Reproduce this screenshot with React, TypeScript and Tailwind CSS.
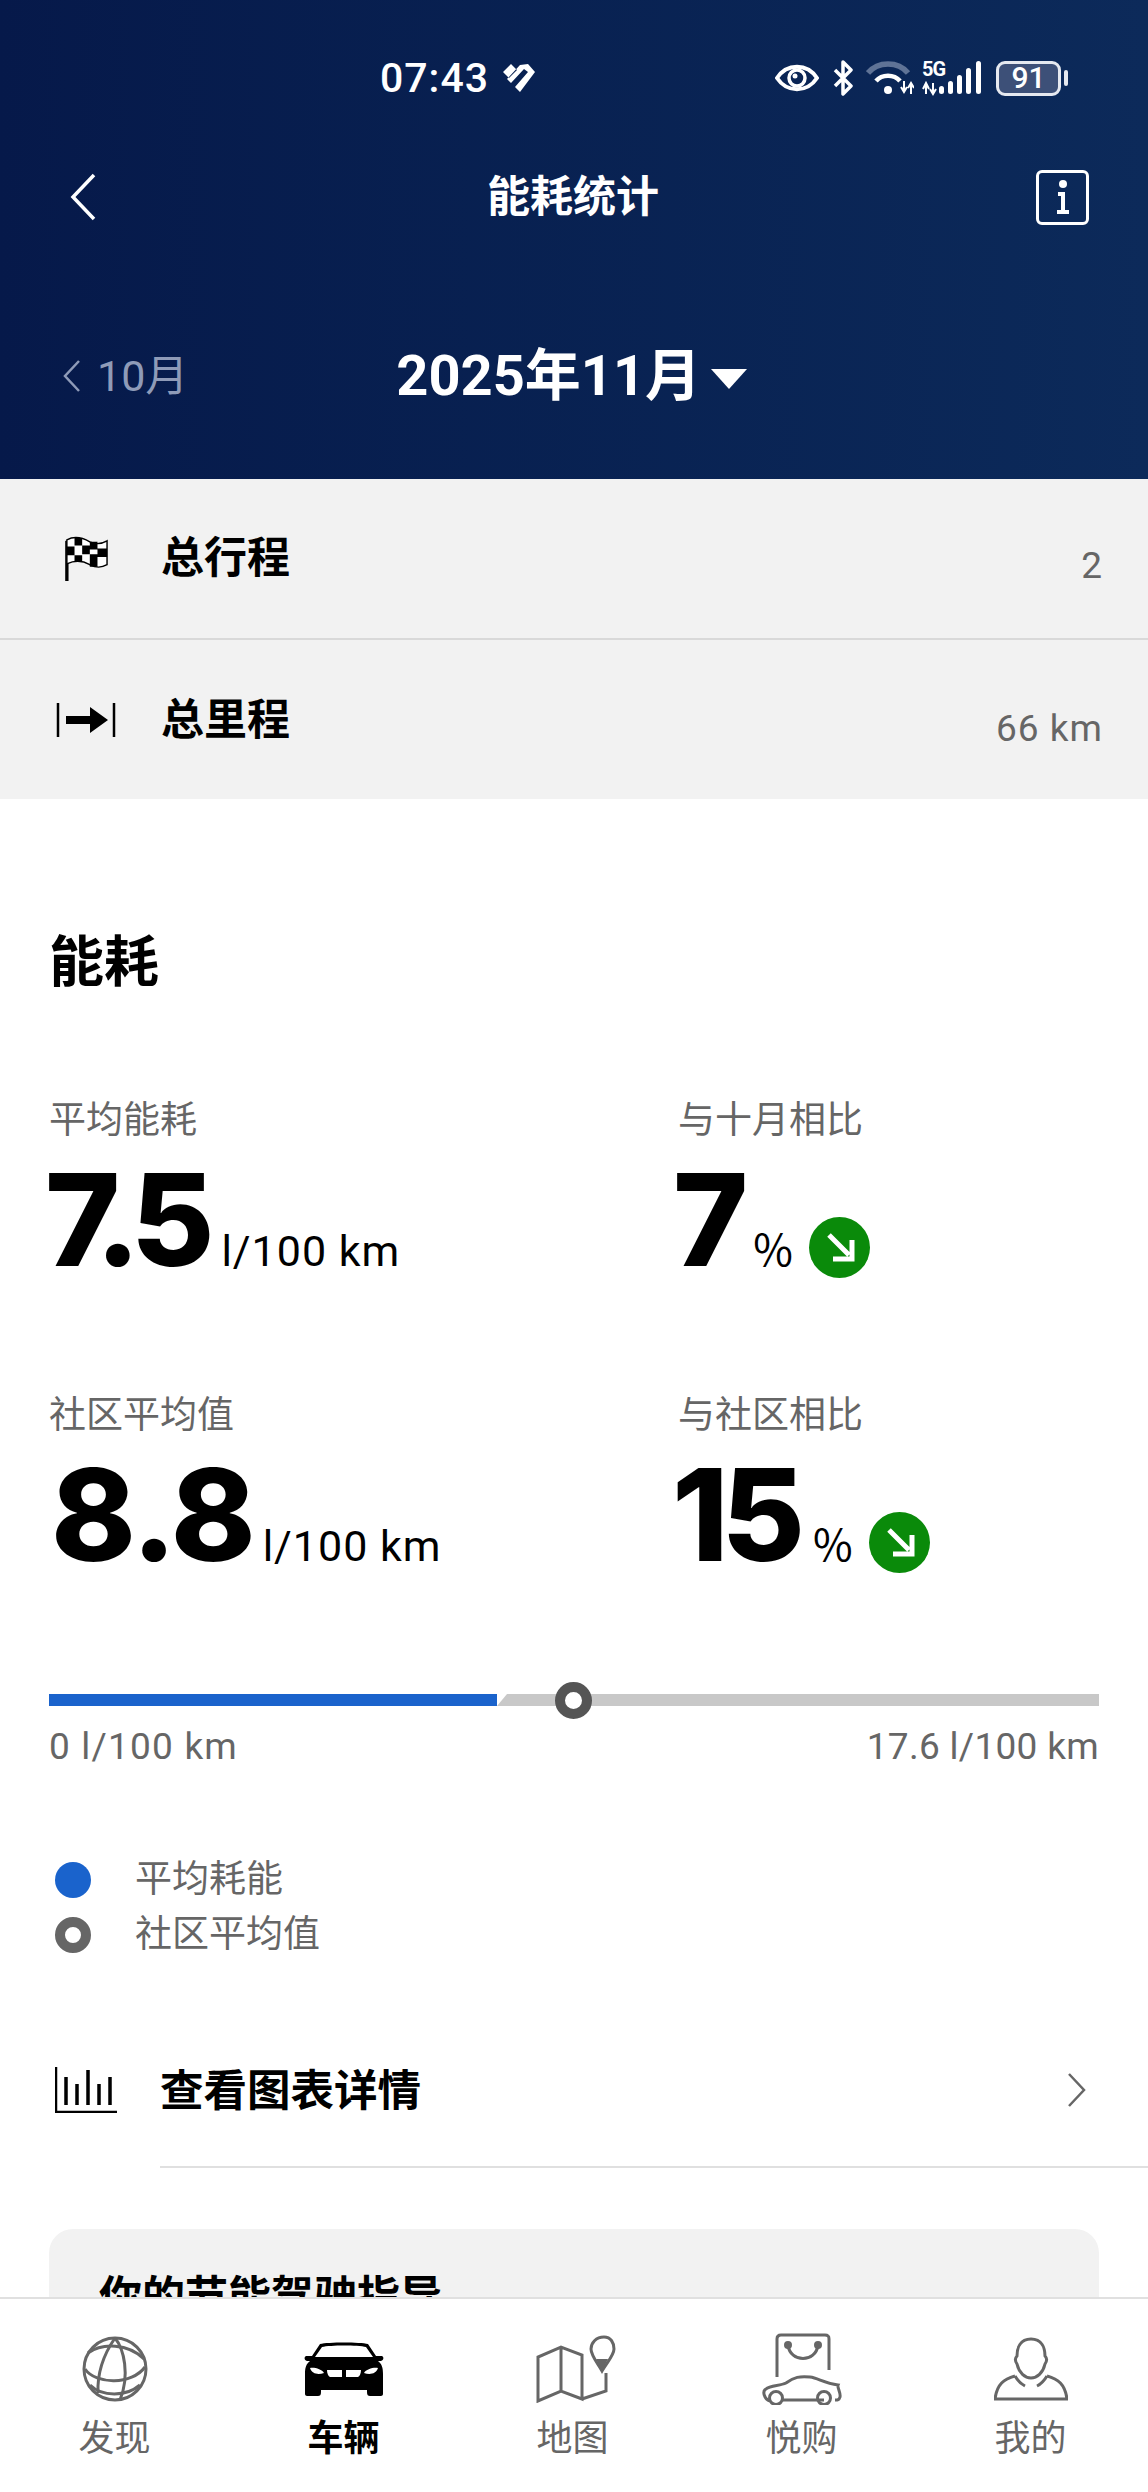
import React, { ReactNode } from "react";

const TabItem = ({ label, active, children }: { label: string; active?: boolean; children: ReactNode }) => {
  return (
    <div className="flex w-[229px] flex-col items-center">
      <div className="flex h-[72px] items-center justify-center">{children}</div>
      <div className={active ? "mt-[12px] text-[36px] leading-[44px] font-bold text-black" : "mt-[12px] text-[36px] leading-[44px] text-[#666]"}>
        {label}
      </div>
    </div>
  );
};

const DownBadge = () => {
  return (
    <svg width="61" height="61" viewBox="0 0 61 61" className="ml-[16px] translate-y-3">
      <circle cx="30.5" cy="30.5" r="30.5" fill="#0a8a0a" />
      <path d="M20 18 L40 38 M43 23 V42 H24" fill="none" stroke="#fff" strokeWidth="5" />
    </svg>
  );
};

const Stat = ({ label, value, valueClass, unit, unitClass, badge }: { label: string; value: string; valueClass: string; unit: string; unitClass: string; badge?: boolean }) => {
  return (
    <div className="flex flex-col">
      <div className="text-[37px] leading-[44px] text-[#666]">{label}</div>
      <div className="mt-[12px] flex h-[130px] items-baseline">
        <span className={valueClass}>{value}</span>
        <span className={unitClass}>{unit}</span>
        {badge && <DownBadge />}
      </div>
    </div>
  );
};

const SummaryRow = ({ icon, label, value, labelClass, valueClass, border }: { icon: ReactNode; label: string; value: string; labelClass: string; valueClass: string; border?: boolean }) => {
  return (
    <div className={border ? "flex h-[161px] items-center border-b-2 border-[#d9d9d9] bg-[#f2f2f2] pr-[45px]" : "flex h-[159px] items-center bg-[#f2f2f2] pr-[45px]"}>
      <div className="flex w-[161px] justify-start pl-[55px]">{icon}</div>
      <div className={labelClass}>{label}</div>
      <div className={valueClass}>{value}</div>
    </div>
  );
};

export default function App() {
  return (
    <div className="flex h-[2492px] w-[1148px] flex-col overflow-hidden bg-white font-[Roboto,'Noto_Sans_CJK_SC',sans-serif]">
      <div className="flex-1 overflow-hidden">
        <div className="h-[479px] overflow-hidden bg-gradient-to-r from-[#06194a] to-[#0c2a5a] text-white">
          {/* status bar */}
          <div className="flex h-[108px] items-center pt-[48px] pl-[380px]">
            <div className="text-[41px] leading-[44px] font-medium tracking-[1px]">07:43</div>
            <svg width="34" height="30" viewBox="0 0 34 30" className="ml-[13px]">
              <path d="M9 1 L1 9 L7 15 L15 7 Z M18 2 L26 1 L33 9 L18 29 L13 24 L26 9 L22 6 L9 20 L5 16 Z" fill="#fff" />
            </svg>
            <svg width="44" height="28" viewBox="0 0 44 28" className="ml-[239px]">
              <path d="M2 14 C12 -1 32 -1 42 14 C32 29 12 29 2 14 Z" fill="none" stroke="#fff" strokeWidth="4" />
              <circle cx="22" cy="14" r="8" fill="none" stroke="#fff" strokeWidth="3.5" />
              <circle cx="20" cy="12" r="2.5" fill="#fff" />
            </svg>
            <svg width="24" height="36" viewBox="0 0 24 36" className="ml-[12px]">
              <path d="M4 10 L20 26 L12 34 V2 L20 10 L4 26" fill="none" stroke="#fff" strokeWidth="3.5" strokeLinejoin="round" />
            </svg>
            <svg width="48" height="36" viewBox="0 0 48 36" className="ml-[11px]">
              <path d="M2 13 C12 1 32 1 42 13" fill="none" stroke="#5f7396" strokeWidth="5.5" />
              <path d="M10 21 C16 14 28 14 34 21" fill="none" stroke="#fff" strokeWidth="4.5" />
              <circle cx="22" cy="30" r="4" fill="#fff" />
              <path d="M38 21 V32 M45 23 V34 M35 27 L38 32 L41 27 M42 28 L45 23 L48 28" fill="none" stroke="#fff" strokeWidth="2" />
            </svg>
            <div className="ml-[8px] flex h-[36px] w-[60px] flex-col">
              <div className="text-[20px] leading-[18px] font-bold tracking-[-1px]">5G</div>
              <svg width="60" height="36" viewBox="0 0 60 36" className="-mt-[18px]">
                <path d="M4 23 V34 M11 23 V34 M1 29 L4 23 L7 29 M8 29 L11 34 L14 29" fill="none" stroke="#fff" strokeWidth="2" />
                <rect x="17" y="26" width="5" height="8" rx="2.5" fill="#fff" />
                <rect x="26" y="21" width="5" height="13" rx="2.5" fill="#fff" />
                <rect x="35" y="15" width="5" height="19" rx="2.5" fill="#fff" />
                <rect x="44" y="8" width="5" height="26" rx="2.5" fill="#fff" />
                <rect x="54" y="1" width="5" height="33" rx="2.5" fill="#fff" />
              </svg>
            </div>
            <div className="ml-[14px] flex h-[35px] w-[65px] items-center justify-center rounded-[9px] border-[3px] border-[#e6e9f0] bg-[#3d5078] text-[30px] leading-[30px] font-medium">
              91
            </div>
            <div className="ml-[3px] h-[16px] w-[4px] rounded-full bg-[#e6e9f0]" />
          </div>

          {/* title */}
          <div className="mt-[57px] flex h-[64px] items-center pr-[59px] pl-[70px]">
            <svg width="26" height="48" viewBox="0 0 26 48">
              <path d="M24 2 L3 24 L24 46" fill="none" stroke="#fff" strokeWidth="3.5" />
            </svg>
            <div className="ml-[391px] text-[43px] leading-[56px] font-bold">能耗统计</div>
            <div className="ml-auto flex h-[55px] w-[53px] items-center justify-center rounded-[6px] border-[3px] border-white">
              <svg width="16" height="36" viewBox="0 0 16 36">
                <circle cx="8" cy="5" r="4" fill="#fff" />
                <path d="M3 13 H10 V31 H14 V35 H2 V31 H6 V17 H3 Z" fill="#fff" />
              </svg>
            </div>
          </div>

          {/* month */}
          <div className="mt-[112px] flex h-[70px] items-center pl-[62px]">
            <svg width="18" height="32" viewBox="0 0 18 32">
              <path d="M17 1 L3 16 L17 31" fill="none" stroke="#8f9bb8" strokeWidth="2.5" />
            </svg>
            <div className="ml-[17px] text-[43px] leading-[50px] text-[#8f9bb8]">10月</div>
            <div className="ml-[208px] text-[56px] leading-[70px] font-bold">2025年11月</div>
            <svg width="36" height="20" viewBox="0 0 36 20" className="mt-[6px] ml-[10px]">
              <path d="M0 0 H36 L18 20 Z" fill="#fff" />
            </svg>
          </div>
        </div>

        <SummaryRow
          border
          label="总行程"
          value="2"
          labelClass="-mt-[2px] text-[43px] leading-[56px] font-bold text-black"
          valueClass="mt-[15px] ml-auto text-[37px] leading-[46px] tracking-[1px] text-[#666]"
          icon={
            <svg width="44" height="48" viewBox="0 0 46 48" className="ml-[9px]">
              <path d="M3 5 V47" stroke="#000" strokeWidth="3.5" />
              <path d="M3 4 C12 -1 20 2 27 6 C33 9 38 9 45 5 V30 C38 34 33 33 27 30 C20 26 12 25 3 29 Z" fill="#fff" stroke="#000" strokeWidth="1.5" />
              <path d="M11 2 H19 V10 H11 Z M27 6 H35 V14 H27 Z M3 11 H11 V20 H3 Z M19 10 H27 V19 H19 Z M35 13 H45 V22 H35 Z M11 20 H19 V27 H11 Z M27 19 H35 V32 H27 Z" fill="#000" />
            </svg>
          }
        />
        <SummaryRow
          label="总里程"
          value="66 km"
          labelClass="text-[43px] leading-[56px] font-bold text-black"
          valueClass="mt-[18px] ml-auto text-[37px] leading-[46px] tracking-[1px] text-[#666]"
          icon={
            <svg width="60" height="36" viewBox="0 0 60 36" className="ml-[1px]">
              <path d="M2 1 V35 M58 1 V35" stroke="#000" strokeWidth="2.5" />
              <path d="M10 14 H34 V5 L52 18 L34 31 V22 H10 Z" fill="#000" />
            </svg>
          }
        />

        <div className="pt-[136px] pl-[49px] text-black">
          <div className="h-[54px] text-[55px] leading-[54px] font-bold">能耗</div>

          <div className="mt-[110px] grid grid-cols-[629px_1fr] gap-y-[109px]">
            <Stat
              label="平均能耗"
              value="7.5"
              valueClass="-ml-[4px] font-[Inter] text-[128px] leading-[130px] font-extrabold tracking-[-9px]"
              unit="l/100 km"
              unitClass="ml-[16px] text-[43px] leading-[50px] tracking-[1px]"
            />
            <Stat
              label="与十月相比"
              value="7"
              valueClass="-ml-[5px] font-[Inter] text-[128px] leading-[130px] font-extrabold"
              unit="%"
              unitClass="ml-[5px] font-['Noto_Sans_CJK_SC'] text-[43px] leading-[50px]"
              badge
            />
            <Stat
              label="社区平均值"
              value="8.8"
              valueClass="ml-[2px] font-[Inter] text-[128px] leading-[130px] font-extrabold tracking-[-2px]"
              unit="l/100 km"
              unitClass="ml-[9px] text-[43px] leading-[50px] tracking-[1px]"
            />
            <Stat
              label="与社区相比"
              value="15"
              valueClass="-ml-[6px] font-[Inter] text-[128px] leading-[130px] font-extrabold tracking-[-7px]"
              unit="%"
              unitClass="ml-[15px] font-['Noto_Sans_CJK_SC'] text-[43px] leading-[50px]"
              badge
            />
          </div>

          {/* range bar */}
          <div className="relative mt-[114px] flex h-[12px] w-[1050px]">
            <div className="w-[448px] bg-[#1a63cc]" />
            <div className="flex-1 bg-[#c8c8c8] [clip-path:polygon(10px_0,100%_0,100%_100%,0_100%)]" />
            <div className="absolute top-[-12px] left-[506px] h-[37px] w-[37px] rounded-full border-[10px] border-[#555] bg-white" />
          </div>
          <div className="mt-[18px] flex w-[1050px] justify-between text-[37px] leading-[46px] text-[#666]">
            <span className="tracking-[1.2px]">0 l/100 km</span>
            <span className="tracking-[0.3px]">17.6 l/100 km</span>
          </div>

          {/* legend */}
          <div className="mt-[88px] flex flex-col gap-[11px]">
            <div className="flex h-[44px] items-center text-[37px] leading-[44px] text-[#666]">
              <div className="ml-[6px] h-[36px] w-[36px] rounded-full bg-[#1a63cc]" />
              <div className="ml-[44px]">平均耗能</div>
            </div>
            <div className="flex h-[44px] items-center text-[37px] leading-[44px] text-[#666]">
              <div className="ml-[6px] h-[36px] w-[36px] rounded-full border-[10px] border-[#666] bg-white" />
              <div className="ml-[44px]">社区平均值</div>
            </div>
          </div>
        </div>

        {/* chart link */}
        <div className="mt-[103px] flex h-[60px] items-center pr-[62px] pl-[55px]">
          <svg width="62" height="46" viewBox="0 0 62 46">
            <path d="M1 0 V45 H62" fill="none" stroke="#000" strokeWidth="2.5" />
            <path d="M11 10 V38 M22 17 V38 M33 3 V38 M44 17 V38 M55 10 V38" stroke="#000" strokeWidth="3.5" />
          </svg>
          <div className="mt-[4px] ml-[43px] text-[43.5px] leading-[56px] font-bold text-black">查看图表详情</div>
          <svg width="18" height="34" viewBox="0 0 18 34" className="ml-auto">
            <path d="M1 1 L16 17 L1 33" fill="none" stroke="#666" strokeWidth="2.5" />
          </svg>
        </div>
        <div className="mt-[46px] ml-[160px] h-[2px] bg-[#e0e0e0]" />

        <div className="mt-[61px] ml-[49px] h-[200px] w-[1050px] rounded-[24px] bg-[#f2f2f2] pt-[40px] pl-[50px]">
          <div className="text-[43px] leading-[56px] font-bold text-black">你的节能驾驶指导</div>
        </div>
      </div>

      {/* tab bar */}
      <div className="flex h-[195px] shrink-0 border-t-2 border-[#e0e0e0] bg-white pt-[34px]">
        <TabItem label="发现">
          <svg width="66" height="68" viewBox="0 0 66 68" fill="none" stroke="#666" strokeWidth="3">
            <circle cx="33" cy="34" r="31" />
            <path d="M6 18 C20 8 46 8 62 24" />
            <path d="M3 34 C14 50 50 50 63 32" />
            <path d="M8 50 C20 62 44 62 58 50" />
            <path d="M33 3 C24 16 15 34 16 58" />
            <path d="M33 3 C42 14 48 40 38 65" />
          </svg>
        </TabItem>
        <TabItem label="车辆" active>
          <svg width="80" height="54" viewBox="0 0 80 54">
            <path d="M16 2 C24 0 56 0 64 2 L72 14 H78 C80 15 80 18 77 19 H74 C78 22 79 26 79 32 V52 C79 53 78 54 77 54 H66 C64 54 63 53 63 50 V48 H17 V50 C17 53 16 54 14 54 H3 C2 54 1 53 1 52 V32 C1 26 2 22 6 19 H3 C0 18 0 15 2 14 H8 Z M18 5 L11 15 H69 L62 5 C54 3 26 3 18 5 Z" fill="#000" fillRule="evenodd" />
            <path d="M6 26 C10 25 18 27 20 31 C14 33 8 32 6 26 Z M74 26 C70 25 62 27 60 31 C66 33 72 32 74 26 Z M23 28 H38 V35 H26 C24 34 23 31 23 28 Z M42 28 H57 C57 31 56 34 54 35 H42 Z" fill="#fff" />
          </svg>
        </TabItem>
        <TabItem label="地图">
          <svg width="80" height="68" viewBox="0 0 80 68" fill="none" stroke="#666" strokeWidth="3" className="ml-[6px]">
            <path d="M2 66 V22 L25 12 L46 20 V64 L25 56 L2 66 Z M25 12 V56 M46 64 L70 56 V38" />
            <path d="M68 2 C60 2 55 8 55 14 C55 20 60 26 66 36 C72 26 78 20 78 14 C78 8 75 2 68 2 Z" />
            <path d="M60 24 L72 24 L66 36 Z" fill="#666" stroke="none" />
          </svg>
        </TabItem>
        <TabItem label="悦购">
          <svg width="80" height="72" viewBox="0 0 80 72" fill="none" stroke="#666" strokeWidth="3">
            <path d="M15 44 V6 C15 3 17 2 19 2 H63 C66 2 67 3 67 6 V37" />
            <path d="M26 12 C28 30 54 30 56 12" />
            <circle cx="26" cy="12" r="2.5" fill="#666" />
            <circle cx="56" cy="12" r="2.5" fill="#666" />
            <path d="M8 68 C2 66 0 58 4 56 C8 52 18 53 24 50 C32 44 38 43 48 44 C56 45 62 50 76 52 C75 54 79 60 78 64 C77 67 76 67 73 67 M62 67 H21" />
            <circle cx="14" cy="65" r="6.5" />
            <circle cx="62" cy="65" r="6.5" />
          </svg>
        </TabItem>
        <TabItem label="我的">
          <svg width="74" height="64" viewBox="0 0 74 64" fill="none" stroke="#666" strokeWidth="3">
            <path d="M37 2 C26 2 23 11 23 19 C21 21 21 24 23 27 C25 36 31 41 37 41 C43 41 49 36 51 27 C53 24 53 21 51 19 C51 11 48 2 37 2 Z" />
            <path d="M21 39 C24 44 27 47 31 49 M53 39 C50 44 47 47 43 49" />
            <path d="M21 39 C10 42 3 47 1 62 H73 C71 47 64 42 53 39" />
          </svg>
        </TabItem>
      </div>
    </div>
  );
}
